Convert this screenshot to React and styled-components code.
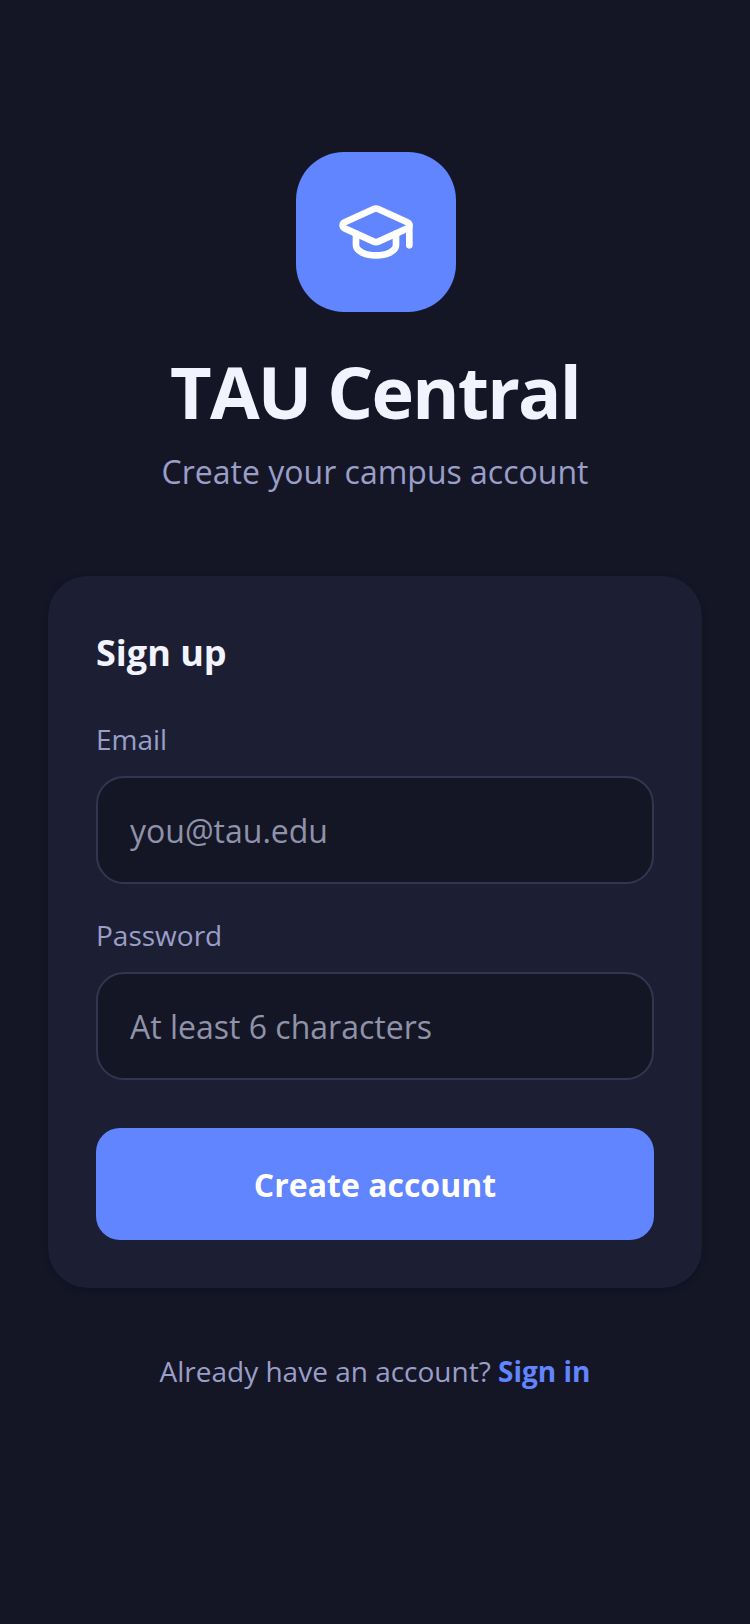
import React from 'react'
import styled, { createGlobalStyle } from 'styled-components'
import { GraduationCap } from 'lucide-react'

const GlobalStyle = createGlobalStyle`
    html, body {
        margin: 0;
        background-color: #141626;
    }
    * {
        box-sizing: border-box;
    }
`
const Page = styled.div`
    width: 750px;
    height: 1624px;
    padding: 152px 48px 0;
    background-color: #141626;
    font-family: 'Open Sans', sans-serif;
    display: flex;
    flex-direction: column;
    align-items: center;
`
const Logo = styled.div`
    width: 160px;
    height: 160px;
    margin-left: 1px;
    border-radius: 48px;
    background-color: #6184ff;
    color: #fff;
    display: flex;
    align-items: center;
    justify-content: center;
`
const Title = styled.h1`
    margin: 30px 0 0;
    color: #f1f3ff;
    font-size: 72px;
    line-height: 98px;
    font-weight: 700;
    letter-spacing: -1.8px;
`
const Subtitle = styled.p`
    margin: 10px 0 0;
    color: #9a9ec8;
    font-size: 32px;
    line-height: 44px;
`
const Card = styled.form`
    width: 654px;
    margin-top: 82px;
    padding: 48px;
    border-radius: 40px;
    background-color: #1c1f33;
    box-shadow: 0 2px 6px rgba(0, 0, 0, 0.25);
    display: flex;
    flex-direction: column;
`
const CardTitle = styled.h2`
    margin: 4px 0 42px;
    color: #f1f3ff;
    font-size: 36px;
    line-height: 50px;
    font-weight: 700;
`
const Label = styled.label`
    display: block;
    margin-bottom: 18px;
    color: #9a9ec8;
    font-size: 28px;
    line-height: 38px;
`
const Input = styled.input`
    display: block;
    width: 100%;
    height: 108px;
    margin-bottom: 32px;
    padding: 0 32px;
    border: 2px solid #33364f;
    border-radius: 28px;
    outline: none;
    background-color: #141626;
    color: #f1f3ff;
    font-family: inherit;
    font-size: 32px;

    &::placeholder {
        color: #8f92a8;
        opacity: 1;
    }
`
const Submit = styled.button`
    height: 112px;
    margin-top: 16px;
    border: none;
    border-radius: 24px;
    background-color: #6184ff;
    color: #fff;
    font-family: inherit;
    font-size: 32px;
    font-weight: 700;
`
const Footer = styled.p`
    margin: 64px 0 0;
    color: #9a9ec8;
    font-size: 28px;
    line-height: 38px;
`
const SignIn = styled.a`
    color: #6184ff;
    font-weight: 700;
    text-decoration: none;
`

const App = () => {
    return (
        <Page>
            <GlobalStyle />
            <Logo>
                <GraduationCap size={80} strokeWidth={2} />
            </Logo>
            <Title>TAU Central</Title>
            <Subtitle>Create your campus account</Subtitle>
            <Card>
                <CardTitle>Sign up</CardTitle>
                <Label htmlFor="email">Email</Label>
                <Input id="email" type="email" placeholder="you@tau.edu" />
                <Label htmlFor="password">Password</Label>
                <Input id="password" type="password" placeholder="At least 6 characters" />
                <Submit type="button">Create account</Submit>
            </Card>
            <Footer>
                Already have an account? <SignIn href="#">Sign in</SignIn>
            </Footer>
        </Page>
    )
}

export default App
